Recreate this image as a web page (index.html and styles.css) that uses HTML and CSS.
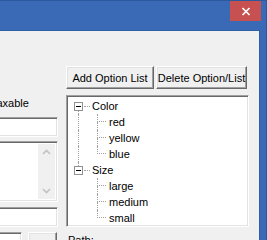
FILE: index.html
```html
<!DOCTYPE html>
<html lang="en">
<head>
    <meta charset="UTF-8">
    <title>Options</title>
    <link rel="stylesheet" href="styles.css">
</head>
<body>
    <div class="window">
        <div class="titlebar">
            <div class="close">
                <svg width="10" height="9" viewBox="0 0 10 9">
                    <path d="M1.5 1 L8.5 8 M8.5 1 L1.5 8" stroke="#fff" stroke-width="1.7" fill="none"/>
                </svg>
            </div>
        </div>
        <div class="client">
            <div class="left">
                <div class="label">Relaxable</div>
                <div class="field"></div>
                <div class="memo">
                    <div class="memo-text"></div>
                    <div class="scrollbar">
                        <svg width="17" height="17" viewBox="0 0 17 17">
                            <path d="M5 10 L8.5 6.5 L12 10" stroke="#c2c2c2" stroke-width="1.6" fill="none"/>
                        </svg>
                        <svg width="17" height="17" viewBox="0 0 17 17">
                            <path d="M5 7 L8.5 10.5 L12 7" stroke="#c2c2c2" stroke-width="1.6" fill="none"/>
                        </svg>
                    </div>
                </div>
                <div class="field"></div>
                <div class="bottom-row">
                    <div class="field short"></div>
                    <button class="small-btn">Link</button>
                </div>
            </div>
            <div class="right">
                <div class="buttons">
                    <button class="btn add">Add Option List</button>
                    <button class="btn del">Delete Option/List</button>
                </div>
                <div class="tree">
                    <div class="node">
                        <div class="exp">
                            <div class="stem"></div>
                            <div class="box"></div>
                            <div class="stem on"></div>
                        </div>
                        <span class="hdash"></span>
                        <span class="text">Color</span>
                    </div>
                    <div class="node child">
                        <div class="gut on"></div>
                        <div class="conn"><div class="up"></div><div class="down on"></div></div>
                        <span class="text">red</span>
                    </div>
                    <div class="node child">
                        <div class="gut on"></div>
                        <div class="conn"><div class="up"></div><div class="down on"></div></div>
                        <span class="text">yellow</span>
                    </div>
                    <div class="node child">
                        <div class="gut on"></div>
                        <div class="conn"><div class="up"></div><div class="down"></div></div>
                        <span class="text">blue</span>
                    </div>
                    <div class="node">
                        <div class="exp">
                            <div class="stem on"></div>
                            <div class="box"></div>
                            <div class="stem"></div>
                        </div>
                        <span class="hdash"></span>
                        <span class="text">Size</span>
                    </div>
                    <div class="node child">
                        <div class="gut"></div>
                        <div class="conn"><div class="up"></div><div class="down on"></div></div>
                        <span class="text">large</span>
                    </div>
                    <div class="node child">
                        <div class="gut"></div>
                        <div class="conn"><div class="up"></div><div class="down on"></div></div>
                        <span class="text">medium</span>
                    </div>
                    <div class="node child">
                        <div class="gut"></div>
                        <div class="conn"><div class="up"></div><div class="down"></div></div>
                        <span class="text">small</span>
                    </div>
                </div>
                <div class="path">Path:</div>
            </div>
        </div>
    </div>
</body>
</html>
```

FILE: styles.css
```css
body {
    margin: 0;
    font-family: "Liberation Sans", Arial, sans-serif;
    font-size: 11px;
    background: #3a6ab5;
    overflow: hidden;
}

.window {
    width: 267px;
    height: 240px;
    box-sizing: border-box;
    background: #3a6ab5;
    border-top: 1px solid #2c589c;
    border-right: 1px solid #2c589c;
    display: flex;
    flex-direction: column;
}

.titlebar {
    height: 29px;
    flex-shrink: 0;
    display: flex;
    justify-content: flex-end;
    padding-right: 5px;
}

.close {
    width: 31px;
    height: 20px;
    background: #c75050;
    display: flex;
    align-items: center;
    justify-content: center;
}

.client {
    flex: 1;
    margin-right: 6px;
    background: #f0f0f0;
    border-top: 1px solid #2f5fa6;
    border-right: 1px solid #2f5fa6;
    display: flex;
    overflow: hidden;
}

/* sunken 3d edge */
.field,
.memo,
.tree {
    box-sizing: border-box;
    flex-shrink: 0;
    background: #fff;
    border-top: 1px solid #a0a0a0;
    border-left: 1px solid #a0a0a0;
    border-bottom: 1px solid #fff;
    border-right: 1px solid #fff;
    box-shadow: inset 1px 1px 0 #696969, inset -1px -1px 0 #e3e3e3;
}

.left {
    width: 158px;
    margin-left: -100px;
    flex-shrink: 0;
    display: flex;
    flex-direction: column;
}

.label {
    flex-shrink: 0;
    margin-top: 66px;
    margin-left: 80px;
    line-height: 13px;
}

.field {
    height: 20px;
    margin-top: 7px;
}

.memo {
    height: 61px;
    margin-top: 4px;
    display: flex;
    padding: 2px;
}

.memo-text {
    flex: 1;
}

.scrollbar {
    width: 17px;
    background: #f0f0f0;
    display: flex;
    flex-direction: column;
    justify-content: space-between;
}

.memo + .field {
    margin-top: 5px;
}

.bottom-row {
    flex-shrink: 0;
    display: flex;
    margin-top: 5px;
}

.field.short {
    width: 122px;
    margin-top: 0;
}

.small-btn,
.btn {
    font-family: inherit;
    font-size: 11px;
    color: #000;
    background: #f0f0f0;
    border-top: 1px solid #fff;
    border-left: 1px solid #fff;
    border-bottom: 1px solid #696969;
    border-right: 1px solid #696969;
    box-shadow: inset -1px -1px 0 #a0a0a0, inset 1px 1px 0 #e3e3e3;
    padding: 0;
    flex-shrink: 0;
}

.small-btn {
    width: 29px;
    height: 23px;
    margin-left: 6px;
    text-align: left;
    padding-left: 3px;
}

.right {
    width: 183px;
    margin-left: 8px;
    flex-shrink: 0;
    display: flex;
    flex-direction: column;
}

.buttons {
    display: flex;
    flex-shrink: 0;
    gap: 2px;
    margin-top: 35px;
}

.btn {
    height: 23px;
}

.btn.add {
    width: 88px;
}

.btn.del {
    width: 91px;
}

.tree {
    height: 132px;
    margin-top: 6px;
    padding: 2px;
}

.node {
    height: 16px;
    display: flex;
    align-items: center;
}

.exp {
    width: 9px;
    height: 16px;
    margin-left: 5px;
    display: flex;
    flex-direction: column;
}

.stem {
    flex: 1;
    margin-left: 4px;
}

.stem.on,
.gut.on,
.conn .up,
.conn .down.on {
    border-left: 1px dotted #a0a0a0;
}

.box {
    width: 9px;
    height: 9px;
    flex-shrink: 0;
    box-sizing: border-box;
    border: 1px solid #919191;
    background: linear-gradient(#000, #000) center / 5px 1px no-repeat, #fff;
}

.hdash {
    width: 6px;
    margin-left: 1px;
    border-top: 1px dotted #a0a0a0;
}

.node .text {
    margin-left: 2px;
    line-height: 16px;
}

.child .text {
    margin-left: 3px;
}

.gut {
    width: 19px;
    height: 16px;
    margin-left: 9px;
    box-sizing: border-box;
}

.conn {
    width: 9px;
    height: 16px;
    display: flex;
    flex-direction: column;
}

.conn .up {
    height: 8px;
    box-sizing: border-box;
    border-bottom: 1px dotted #a0a0a0;
}

.conn .down {
    flex: 1;
}

.path {
    flex-shrink: 0;
    margin-top: 7px;
    margin-left: 2px;
    line-height: 13px;
}
```
